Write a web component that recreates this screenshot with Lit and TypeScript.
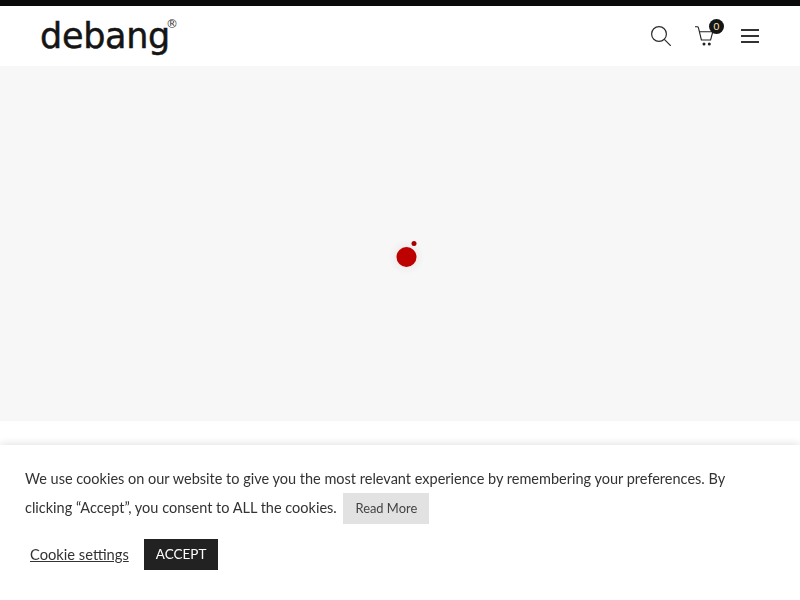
import { LitElement, html, css } from "lit";
import { customElement } from "lit/decorators.js";

@customElement("app-root")
export class AppRoot extends LitElement {
  static styles = css`
    :host { display: block; height: 600px; overflow: hidden; position: relative; background: #fff; font-family: Lato, sans-serif; color: #333; }
    .top { height: 6px; background: #0a0a0a; }
    .header { height: 60px; display: flex; align-items: center; justify-content: space-between; padding: 0 41px 0 40px; background: #fff; }
    .logo { display: flex; align-items: flex-start; color: #151515; }
    .word { font-family: "DejaVu Sans", sans-serif; font-size: 35px; line-height: 44px; letter-spacing: -0.3px; -webkit-text-stroke: 0.5px #151515; }
    .reg { font-family: "DejaVu Sans", sans-serif; font-size: 12px; line-height: 14px; margin-left: -4px; margin-top: 3px; color: #333; }
    .icons { display: flex; align-items: center; }
    .cart { position: relative; display: block; width: 20px; height: 20px; margin: 0 26px 0 24px; }
    svg { display: block; }
    .badge { position: absolute; top: -7px; right: -9px; width: 15px; height: 15px; border-radius: 50%; background: #151515; color: #ffe6b8; font-size: 10px; line-height: 15px; text-align: center; }
    .hero { height: 355px; background: #f7f7f7; display: flex; align-items: center; justify-content: center; }
    .loader { position: relative; width: 20px; height: 20px; margin: 26px 0 0 13px; transform: translateX(-0.5px); border-radius: 50%; background: #bd0000; box-shadow: 0 0 10px rgba(120,60,60,.14); }
    .dot { position: absolute; top: -6px; left: 15.3px; width: 5px; height: 5px; border-radius: 50%; background: #a80000; }
    .cookie { position: fixed; left: 0; right: 0; bottom: 0; height: 155px; box-sizing: border-box; padding: 19px 25px 0; background: #fff; box-shadow: 0 -1px 8px rgba(0,0,0,.12); font-size: 14.5px; line-height: 29px; }
    .msg { margin: 0; max-width: 720px; }
    .more { display: inline-block; margin-left: 3px; padding: 0 12px; height: 31px; line-height: 31px; background: #e2e2e2; font-size: 12.9px; color: #444; vertical-align: top; }
    .actions { display: flex; align-items: center; gap: 15px; margin: 15px 0 0 5px; }
    .settings { color: #333; font-size: 14.7px; text-decoration: underline; }
    .accept { height: 31px; line-height: 31px; padding: 0 12px; background: #222; color: #fff; font-size: 13.5px; }
  `;
  render() {
    return html`
      <div class="top"></div>
      <header class="header">
        <div class="logo"><span class="word">debang</span><span class="reg">®</span></div>
        <div class="icons">
          <svg width="20" height="20" viewBox="0 0 20 20" fill="none" stroke="#2b2b2b" stroke-width="1.2">
            <circle cx="8" cy="8" r="7.4"/><path d="M13.3 13.3 19.8 19.8"/>
          </svg>
          <span class="cart">
            <svg width="20" height="20" viewBox="0 0 20 20" fill="none" stroke="#222" stroke-width="1.1">
              <path d="M0 .8h2.3q.9 0 1.1.9l3 12.3h9.2l2.2-8.3H4.4"/>
              <circle cx="9" cy="18" r="1.5" fill="#222" stroke="none"/><circle cx="14.3" cy="18" r="1.5" fill="#222" stroke="none"/>
            </svg>
            <span class="badge">0</span>
          </span>
          <svg width="18" height="14" viewBox="0 0 18 14" fill="#333">
            <rect y="0" width="18" height="2"/><rect y="6" width="18" height="2"/><rect y="12" width="18" height="2"/>
          </svg>
        </div>
      </header>
      <div class="hero"><div class="loader"><span class="dot"></span></div></div>
      <aside class="cookie">
        <p class="msg">We use cookies on our website to give you the most relevant experience by remembering your preferences. By clicking “Accept”, you consent to ALL the cookies. <span class="more">Read More</span></p>
        <div class="actions"><span class="settings">Cookie settings</span><span class="accept">ACCEPT</span></div>
      </aside>
    `;
  }
}
